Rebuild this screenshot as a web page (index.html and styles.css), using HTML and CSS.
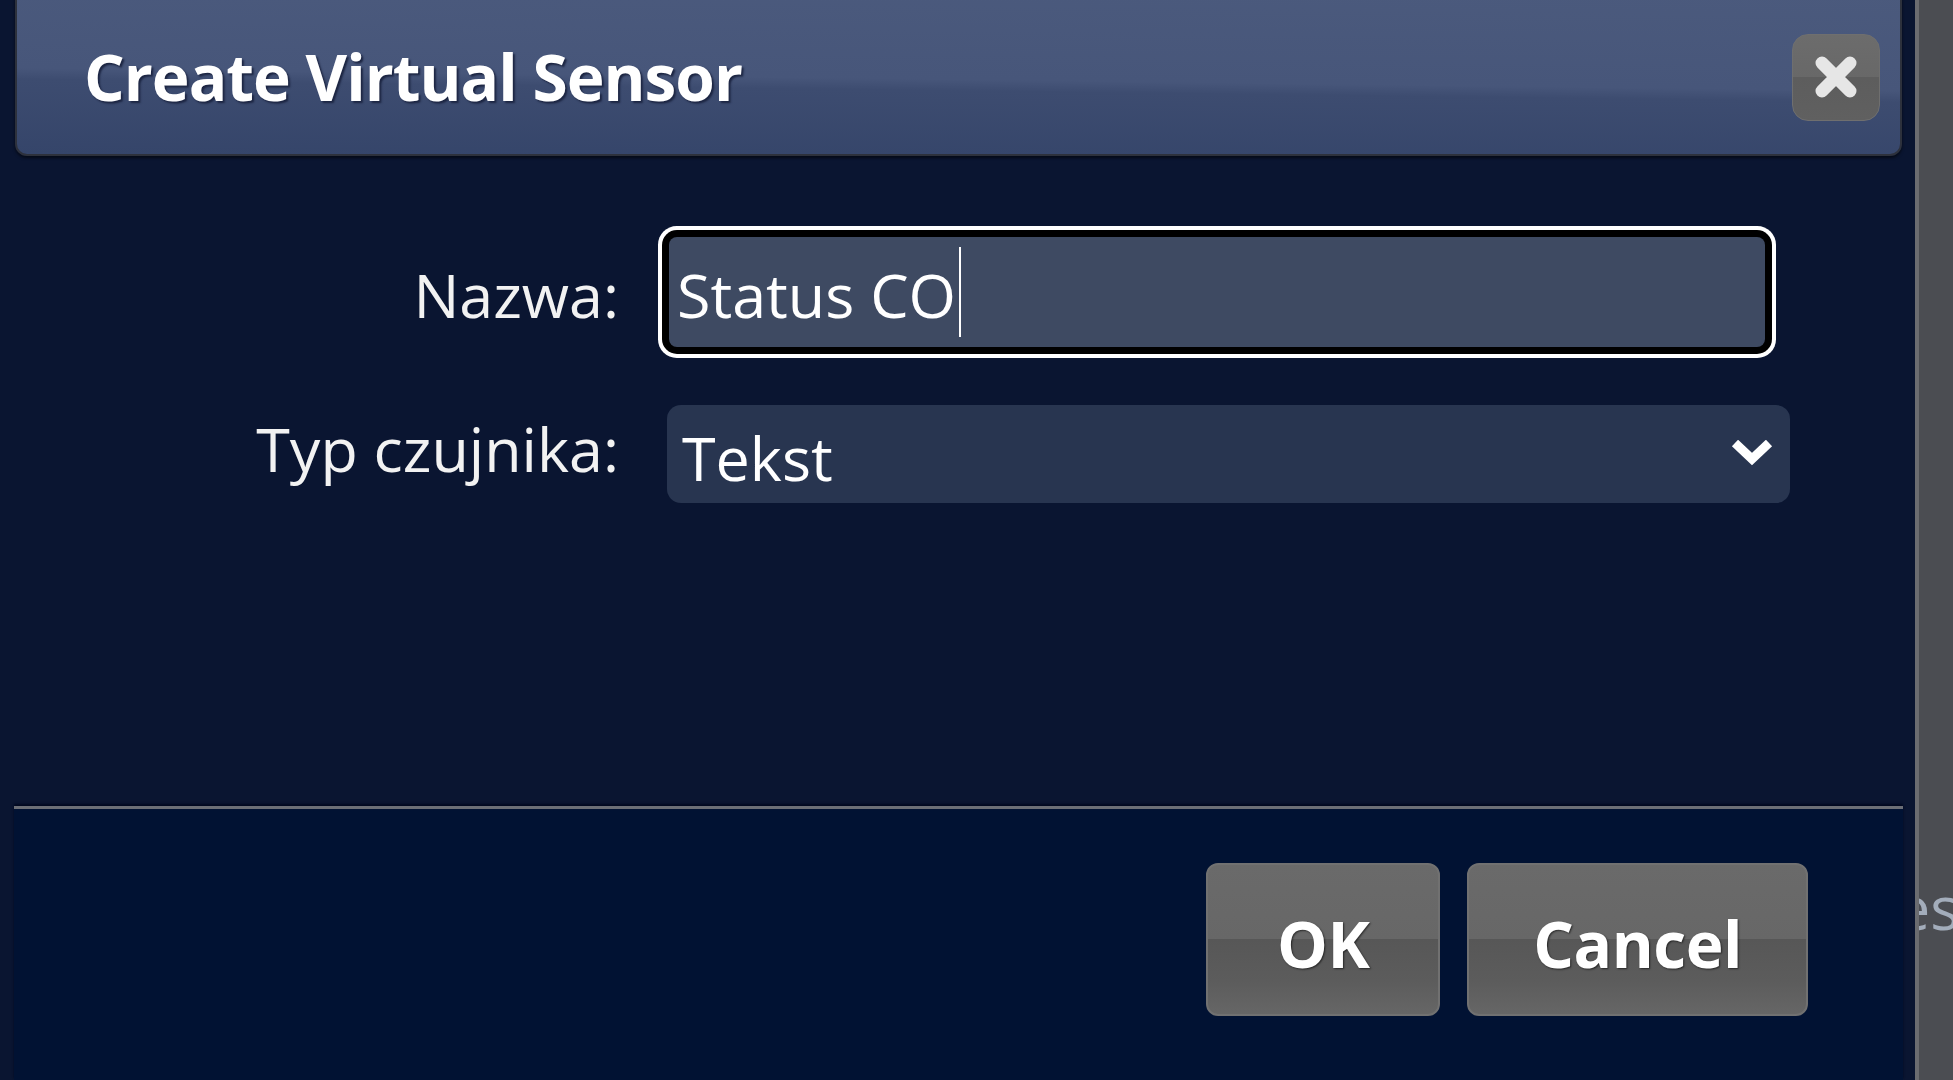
FILE: index.html
```html
<!DOCTYPE html>
<html lang="pl">
<head>
  <meta charset="UTF-8">
  <meta name="viewport" content="width=device-width, initial-scale=1.0">
  <title>Create Virtual Sensor</title>
  <link rel="stylesheet" href="styles.css">
</head>
<body>
  <div class="dialog">
    <div class="titlebar">
      <span class="title">Create Virtual Sensor</span>
      <button class="close" title="Close">
        <svg width="46" height="46" viewBox="0 0 46 46">
          <path d="M9 9 L37 37 M37 9 L9 37" stroke="#e6e6e6" stroke-width="13" stroke-linecap="round" fill="none"/>
        </svg>
      </button>
    </div>

    <div class="content">
      <div class="form">
        <label class="label label-name">Nazwa:</label>
        <div class="text-field"><span>Status CO</span><span class="caret"></span></div>

        <label class="label label-type">Typ czujnika:</label>
        <div class="select-field">
          <span class="select-value">Tekst</span>
          <svg width="42" height="28" viewBox="0 0 42 28">
            <polyline points="4,3 21,19 38,3" stroke="#ffffff" stroke-width="9" fill="none"/>
          </svg>
        </div>
      </div>
    </div>

    <div class="buttonpane">
      <button class="btn">OK</button>
      <button class="btn">Cancel</button>
    </div>
  </div>

  <div class="side"><span>es</span></div>
</body>
</html>
```

FILE: styles.css
```css
body {
  margin: 0;
  height: 1080px;
  overflow: hidden;
  display: flex;
  background: #0a1531;
  font-family: "Open Sans", sans-serif;
}
.dialog {
  width: 1915px;
  flex: none;
  display: flex;
  flex-direction: column;
  padding: 0 12px 0 14px;
  box-sizing: border-box;
}
.titlebar {
  margin: -12px 1px 0;
  height: 168px;
  box-sizing: border-box;
  border: 2px solid #2d313c;
  border-radius: 12px;
  box-shadow: 0 2px 3px rgba(0, 0, 0, 0.55);
  background: linear-gradient(180.7deg, #4b5a7d 0%, #47567a 54%, #3d4c70 60%, #35456a 100%);
  display: flex;
  align-items: center;
  justify-content: space-between;
  padding: 10px 20px 0 67px;
}
.title {
  color: #fff;
  font-size: 64px;
  font-weight: 700;
  line-height: 64px;
  letter-spacing: -1px;
  text-shadow: 2px 2px 2px #1c2542;
}
.close {
  width: 88px;
  height: 87px;
  padding: 0;
  border: 1px solid #6f6f6f;
  border-radius: 16px;
  background: linear-gradient(#6c6c6c 0%, #686868 50%, #5d5d5d 50%, #606060 100%);
  display: flex;
  align-items: center;
  justify-content: center;
  cursor: pointer;
}
.content {
  height: 650px;
  padding-top: 81px;
  box-sizing: border-box;
}
.form {
  display: grid;
  grid-template-columns: 605px 1123px;
  column-gap: 48px;
  row-gap: 53px;
  align-items: start;
}
.label {
  text-align: right;
  font-size: 61px;
  color: #f2f2f2;
}
.label-name {
  line-height: 115px;
}
.label-type {
  line-height: 87px;
}
.text-field {
  width: 1096px;
  height: 110px;
  margin-left: 2px;
  box-sizing: border-box;
  padding-left: 8px;
  background: #3e4a62;
  border-radius: 8px;
  box-shadow: 0 0 0 7px #000, 0 0 0 11px #fff;
  color: #fff;
  font-size: 61px;
  line-height: 115px;
  white-space: nowrap;
  overflow: hidden;
}
.caret {
  display: inline-block;
  width: 2px;
  height: 90px;
  margin-left: 3px;
  background: #fff;
  vertical-align: -19px;
}
.select-field {
  height: 98px;
  box-sizing: border-box;
  padding: 0 17px 0 15px;
  background: #283550;
  border-radius: 14px;
  display: flex;
  align-items: center;
  justify-content: space-between;
  color: #fff;
  font-size: 61px;
}
.select-value {
  align-self: flex-start;
  line-height: 105px;
}
.buttonpane {
  flex: 1;
  display: flex;
  justify-content: flex-end;
  align-items: flex-start;
  gap: 27px;
  padding: 54px 95px 0 0;
  border-top: 3px solid #6b6e76;
  background: #011233;
  box-shadow: 0 -2px 2px #000820;
}
.btn {
  height: 153px;
  min-width: 234px;
  padding: 8px 64px 0;
  box-sizing: border-box;
  border: 2px solid #717171;
  border-radius: 12px;
  background: linear-gradient(#6a6a6a 0%, #676767 50%, #575757 50%, #5c5c5c 78%, #666 100%);
  color: #fff;
  font-family: "Open Sans", sans-serif;
  font-size: 64px;
  font-weight: 700;
  line-height: 64px;
  letter-spacing: -0.5px;
  text-shadow: 1px 1px 2px rgba(0, 0, 0, 0.6);
  cursor: pointer;
}
.side {
  flex: 1;
  background: #4b4d52;
  border-left: 4px solid #6b6c70;
  overflow: hidden;
  padding-top: 863px;
}
.side span {
  display: block;
  margin-left: -23px;
  white-space: nowrap;
  font-size: 61px;
  line-height: 87px;
  color: #a3adbb;
}
```
